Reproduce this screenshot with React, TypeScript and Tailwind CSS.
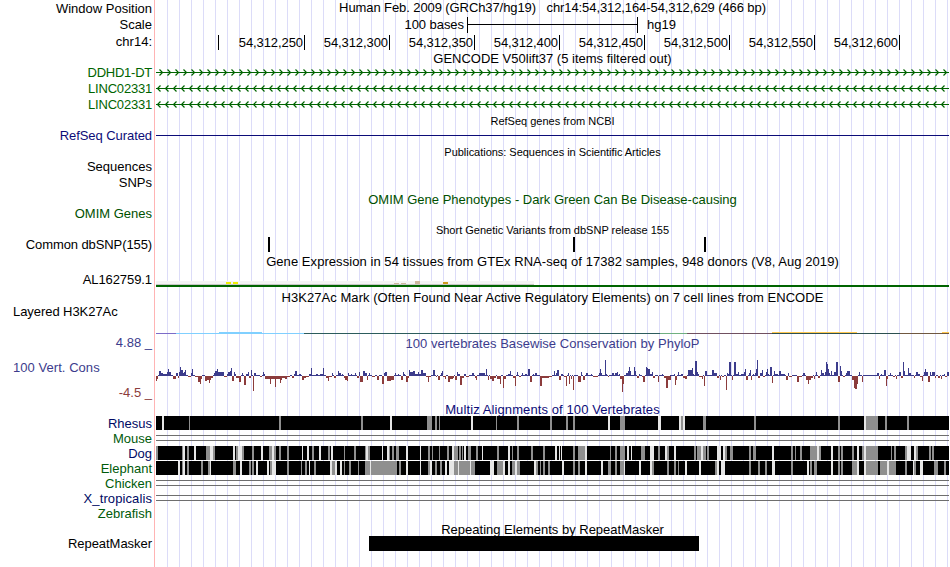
import type { ReactNode } from 'react'

// every drawing shares the same x axis: 156 is the first data pixel, 949 the end
const X0 = 156
const W = 793

const GREEN = '#006400'

const ticks = [304, 389, 474, 559, 644, 729, 814, 899]
const tickLabels = ['54,312,250', '54,312,300', '54,312,350', '54,312,400', '54,312,450', '54,312,500', '54,312,550', '54,312,600']

// [x, width, height], positive is up and negative is down
const phyloP: number[][] = [
  [156, 1, -5], [157, 1, -3], [158, 1, 1], [159, 1, 5], [160, 1, 5], [161, 2, 3], [163, 4, 2], [167, 1, 4], [168, 1, 7], [169, 2, 4], [171, 2, 1], [173, 3, -3], [176, 2, 3], [178, 1, -2],
  [179, 1, 4], [180, 1, 9], [181, 2, 6], [183, 1, 3], [184, 1, 4], [185, 1, 6], [186, 2, 1], [188, 3, -1], [191, 1, 3], [192, 1, 7], [193, 2, 1], [195, 3, -1], [198, 2, -6], [200, 1, -8], [201, 1, -3], [202, 2, 1], [205, 2, -5], [207, 2, -4], [209, 1, -7], [210, 1, -4], [211, 2, -2],
  [213, 1, 1], [214, 1, 3], [215, 2, 5], [217, 1, 7], [218, 2, 4], [220, 4, 4], [224, 3, -1], [227, 1, 2], [228, 2, 4], [230, 1, 5], [231, 1, 8], [232, 2, -5], [234, 1, 4], [235, 1, 2], [236, 3, -2], [239, 2, -6], [241, 1, 1], [242, 1, 3], [243, 1, 1], [244, 2, -9], [246, 2, 2], [248, 1, 4], [249, 2, -2], [251, 1, 6], [252, 1, 1], [253, 1, -15], [254, 2, 3], [256, 4, 1], [260, 2, -1], [263, 1, 4], [264, 1, 2],
  [265, 5, -3], [270, 1, -8], [271, 4, -3], [275, 1, -11], [276, 4, -3], [280, 1, -7], [281, 1, -4], [282, 3, -2], [285, 2, -3], [287, 3, -1], [290, 1, 1], [292, 2, -2], [294, 1, 2], [295, 2, 5], [297, 2, 1], [299, 2, 2], [302, 2, -4], [304, 2, -2], [306, 3, -1], [309, 2, 2], [311, 1, 8], [312, 4, 1], [316, 2, 2], [318, 2, 1], [320, 3, 2], [323, 1, 8], [324, 2, 1], [326, 2, -2], [328, 1, -5], [329, 3, -1], [332, 1, 3], [334, 2, -2], [338, 1, 5], [339, 2, 3], [342, 1, 2], [344, 1, -2], [345, 2, -4], [347, 1, -5], [348, 1, 3], [351, 1, 2], [355, 1, 3], [357, 2, -2], [359, 1, 4], [360, 2, -6], [362, 1, -6], [363, 2, 5], [365, 2, 3], [367, 1, -4], [369, 1, 3], [372, 3, -1], [377, 2, -4], [381, 1, 1], [382, 2, -8], [384, 1, 3], [385, 2, 4], [387, 4, -5], [391, 3, -4], [395, 1, 3], [398, 1, 2], [401, 2, -4], [403, 1, 4], [404, 1, 2], [406, 2, -6], [408, 1, -2], [409, 1, 6], [410, 3, 4], [413, 2, 5], [415, 3, 2],
  [418, 1, 4], [419, 2, 2], [421, 2, 6], [423, 3, 3], [426, 2, -1], [428, 1, -6], [429, 2, -1], [433, 2, 6], [436, 1, -1], [438, 2, -4], [441, 1, 3], [442, 1, 5], [443, 2, -1], [445, 1, -3], [446, 2, 1], [448, 2, -6], [450, 3, -3], [453, 1, -2], [455, 2, -4], [457, 1, 4], [458, 2, 2], [460, 2, -9], [462, 2, -2], [464, 2, 2], [466, 3, -1], [472, 2, 3], [475, 1, -2], [476, 1, -4], [479, 4, 3], [483, 2, 3], [486, 1, 7], [488, 1, -4], [490, 2, -3], [492, 2, -5], [494, 2, -2], [497, 3, -3], [500, 1, -8], [501, 1, 1], [503, 1, -12], [504, 2, -3], [508, 2, 2], [510, 1, 5], [513, 2, -2], [515, 1, -10], [517, 1, 4], [519, 2, -1], [522, 1, 3], [525, 2, 2], [528, 2, 7], [530, 2, -6], [533, 1, 2], [535, 2, 3], [540, 2, -10], [542, 4, -2], [546, 3, -2], [549, 3, -1], [554, 1, 5], [556, 1, 3], [557, 2, 6], [559, 2, -4], [561, 2, 2], [564, 2, -1], [566, 1, -10], [568, 1, 3], [569, 1, -8], [571, 1, -3], [573, 1, -14], [575, 3, 1], [578, 3, -6], [581, 1, 4], [583, 2, -4], [586, 2, 3], [588, 2, 1], [591, 1, 2], [593, 5, -1], [599, 1, 3], [600, 1, 7], [601, 1, 3], [605, 1, 16], [606, 1, 2], [608, 1, -1], [612, 2, 3], [615, 2, 3], [617, 1, 4], [619, 1, 2], [620, 2, -3], [622, 1, -16], [623, 1, -8], [625, 1, 1], [626, 2, 3], [628, 1, 5], [629, 1, 9], [630, 1, 5], [634, 1, 9], [635, 1, 5], [637, 2, -2], [639, 1, 2], [642, 2, -1], [643, 2, -6], [646, 1, 9], [647, 1, 8], [648, 2, 7], [650, 2, 2], [652, 1, 4], [653, 2, -2], [655, 2, 1], [658, 1, -6], [662, 1, 2], [664, 2, -2], [666, 2, -12], [668, 3, -4], [670, 1, 1], [674, 1, 2], [675, 1, -9], [676, 1, -4], [678, 1, 4], [681, 2, 2],
  [683, 2, -2], [685, 2, -3], [688, 4, 6], [692, 1, 8], [693, 1, 2], [695, 2, 15], [697, 1, 4], [698, 1, 2], [699, 3, -1], [702, 1, -3], [704, 1, -10], [705, 2, 5], [708, 3, 1], [712, 2, 6], [714, 3, 3], [717, 2, -2], [720, 1, -4], [722, 2, -1], [726, 1, -14], [727, 1, 3], [728, 1, 2], [729, 2, 14], [732, 1, -4], [734, 2, 14], [736, 2, 2], [738, 1, 4], [741, 3, 2], [744, 1, 4], [745, 1, 7], [746, 2, -4], [749, 1, 3], [750, 1, 6], [751, 1, -4], [753, 1, 2], [755, 1, 3], [756, 1, 7], [757, 1, 16], [758, 2, -2], [760, 2, 3], [762, 1, 6], [763, 2, -1], [766, 1, 4], [767, 1, 7], [768, 1, 2], [770, 2, 9], [772, 1, -7], [774, 1, 5], [775, 3, 2], [779, 2, 5], [781, 4, 2], [786, 2, -4], [788, 1, 3], [789, 3, -1], [793, 1, 1], [797, 2, -6], [799, 3, -1], [803, 2, 3], [806, 2, -4], [808, 1, -8], [809, 2, -4], [811, 2, -2], [814, 1, -3], [816, 1, 4], [818, 2, -2], [821, 1, 6], [822, 2, 3], [825, 1, 4], [826, 1, 14], [827, 1, 12], [828, 1, 7], [829, 1, 3], [831, 1, 5], [832, 2, 1], [834, 2, 4], [836, 2, 14], [838, 2, -6], [840, 1, 10], [841, 1, 5], [843, 2, -1], [846, 1, 3], [847, 3, 5], [852, 2, -4], [854, 1, -12], [855, 2, -13], [857, 1, -8], [858, 1, 1], [859, 1, 4], [862, 1, -6], [864, 13, 1], [877, 2, 3], [879, 1, -3], [881, 1, 2], [884, 2, 6], [886, 1, -10], [887, 1, -3], [890, 1, 3], [893, 2, -1], [896, 1, -3], [899, 2, 4], [901, 2, -2], [903, 1, 14], [904, 1, 5], [908, 1, 8], [909, 2, 3], [912, 2, 1], [914, 1, -2], [916, 2, 4], [918, 2, 2], [920, 2, -1], [922, 1, -5], [924, 1, 4], [925, 1, 7], [926, 2, 4], [928, 2, -6], [930, 1, 4], [932, 3, 4], [935, 1, -2], [938, 2, -2], [941, 1, -3], [944, 1, 2], [945, 2, -1], [947, 2, 4],
]

// gaps in the black alignment bars: x, shade (g grey, w light), width
const rhesus = '162w2 189g1 279g2 361g2 390w2 427g5 435g2 439g1 471w2 496g1 517g2 550g2 566g2 573g2 608w2 620g5 658w3 679w2 681g2 683w2 703g3 754g2 838g2 864w2 866g12 885g2 907g2'
const dog = '156g2 182g1 183w2 187g2 194w2 206g4 210w1 211w2 213g2 233w2 236g2 238w4 242g2 252g2 261w2 269g3 272w2 274g2 279g2 287g2 302w1 307w2 312g2 319w2 328g2 331w2 344g1 354g2 365g1 366w2 368g2 382w1 387w2 389g1 392g2 396g3 406w2 420w1 428g2 432g1 439g1 447g2 452w2 454g4 459g2 462g1 464w2 468g3 476g2 482w1 497g2 508w2 512g1 517g2 531g2 543g2 555w2 559w1 561w1 573g2 578g7 585w2 610g1 615g2 620g5 627w2 631w1 641g4 650w4 658g2 665w2 667g2 674w2 694g2 697g4 701w2 703g3 707g2 717w4 723w2 725g2 730g3 749g2 753g3 772w2 791g2 795g1 800g2 810g7 817w2 819g2 831w2 838g2 841g2 852g2 857w2 862g2 864w2 866g12 891g1 894g2 905g2 907w4 914w2 916g2 929g2 932g2'
const elephant = '178w2 182g1 183w2 187g2 201g2 208g2 210w1 233g3 240w2 249g2 252g2 256w2 267w2 270g2 272w4 287g2 301g1 305g2 309w1 314g2 330w2 332g1 333g2 335w2 340w2 344g1 349g2 358g1 365g5 370w1 371g26 399g2 406w2 420w1 428g2 430w2 435g2 440g2 445w2 449w5 454g4 458w1 459g11 470w1 471g4 490w4 497g6 503w2 508w2 512g3 515w2 517g3 534w2 536g2 540g1 543g2 548g2 562w2 573g2 578g2 585w2 601w2 608g3 615g2 620g4 624w1 639w2 650w2 652g2 667g2 674g2 678g1 685w2 699w2 715g2 717w2 721w4 749g2 758g2 765g2 772w3 791g2 807w2 810g2 814g3 831w2 838g2 841g2 852g5 857w2 864w2 866g12 880g7 887w2 889g7 905g2 913w1 914g2 920w3 934g4 944g2'

function Track({ h, label = '', labelClass = '', children }: { h: string; label?: string; labelClass?: string; children?: ReactNode }) {
  return (
    <div className={`flex shrink-0 ${h}`}>
      <div className={`flex w-[152px] mr-1 shrink-0 items-center justify-end whitespace-pre ${labelClass}`}>{label}</div>
      <div className="flex w-[793px] shrink-0 items-center justify-center whitespace-pre">{children}</div>
    </div>
  )
}

function Plot({ h, children }: { h: number; children: ReactNode }) {
  return (
    <svg width={W} height={h} viewBox={`${X0} 0 ${W} ${h}`} shapeRendering="crispEdges" className="block shrink-0 self-start">
      {children}
    </svg>
  )
}

function GeneArrows({ dir }: { dir: 'left' | 'right' }) {
  let d = ''
  for (let i = 0; i < 99; i++) {
    const x = i * 8
    d += dir === 'right' ? `M${x + 159.5} 4.5l3 3l-3 3` : `M${x + 160.5} 4.5l-3 3l3 3`
  }
  return (
    <Plot h={16}>
      <rect x={X0} y={7} width={W} height={1} fill={GREEN} />
      <path d={d} fill="none" stroke={GREEN} strokeWidth={1.2} shapeRendering="auto" />
    </Plot>
  )
}

function Alignment({ gaps }: { gaps: string }) {
  return (
    <Plot h={15}>
      <rect x={X0} y={0} width={W} height={14} fill="#000" />
      {gaps.split(' ').map((gap) => {
        const [x, w] = gap.split(/[gw]/).map(Number)
        return <rect key={gap} x={x} y={0} width={w} height={14} fill={gap.includes('g') ? '#8f8f8f' : '#e6e6e6'} />
      })}
    </Plot>
  )
}

function DoubleLine() {
  return (
    <Plot h={15}>
      <rect x={X0} y={4} width={W} height={1} fill="#6e6e6e" />
      <rect x={X0} y={9} width={W} height={1} fill="#6e6e6e" />
    </Plot>
  )
}

function Conservation() {
  return (
    <Plot h={50}>
      <rect x={158} y={23} width={W - 2} height={1} fill="#3c3c8c" />
      {phyloP.map(([x, w, v]) =>
        v > 0 ? (
          <rect key={x} x={x} y={24 - v} width={w} height={v} fill="#3c3c8c" />
        ) : (
          <g key={x}>
            <rect x={x} y={23} width={w} height={1} fill="#fff" />
            <rect x={x} y={24} width={w} height={-v} fill="#8c3c3c" />
          </g>
        ),
      )}
    </Plot>
  )
}

export default function App() {
  return (
    <div className="relative h-[567px] w-[950px] overflow-hidden bg-white font-['Liberation_Sans',sans-serif] text-[13px] leading-none text-black">
      <svg width={950} height={567} shapeRendering="crispEdges" className="absolute inset-0">
        <rect x={154} y={0} width={1} height={567} fill="#ffb4b4" />
        {Array.from({ length: 66 }, (_, i) => (
          <rect key={i} x={167 + i * 12} y={0} width={1} height={567} fill="#dcdcf8" />
        ))}
      </svg>

      <div className="relative flex flex-col">
        <Track h="h-[17px]" label="Window Position">
          <span className="pb-0.5 tracking-[-0.09px]">Human Feb. 2009 (GRCh37/hg19)   chr14:54,312,164-54,312,629 (466 bp)</span>
        </Track>
        <Track h="h-[17px]" label="Scale" labelClass="pb-0.5">
          <div className="flex w-full items-center">
            <span className="w-[308px] pb-0.5 text-right tracking-[-0.05px]">100 bases</span>
            <svg width={179} height={17} shapeRendering="crispEdges" className="ml-[3px]">
              <path d="M0.5 0v16M0 7.5h171M170.5 0v16" stroke="#000" fill="none" />
            </svg>
            <span className="ml-px pb-0.5">hg19</span>
          </div>
        </Track>
        <Track h="h-[17px]" label="chr14:" labelClass="pb-0.5">
          <div className="flex w-full items-start">
            <div className="ml-[62px] h-[15px] w-px bg-black" />
            {ticks.map((x, i) => (
              <div key={x} className={`flex h-[15px] items-center justify-end border-r border-black pr-px tracking-[-0.08px] ${i === 0 ? 'w-[86px]' : 'w-[85px]'}`}>{tickLabels[i]}</div>
            ))}
          </div>
        </Track>
        <Track h="h-[14px]">GENCODE V50lift37 (5 items filtered out)</Track>
        <Track h="h-[16px]" label="DDHD1-DT" labelClass="pb-0.5 tracking-[-0.25px] text-[#006400]"><GeneArrows dir="right" /></Track>
        <Track h="h-[16px]" label="LINC02331" labelClass="pb-0.5 tracking-[-0.2px] text-[#006400]"><GeneArrows dir="left" /></Track>
        <Track h="h-[16px]" label="LINC02331" labelClass="pb-0.5 tracking-[-0.2px] text-[#006400]"><GeneArrows dir="left" /></Track>

        <Track h="h-[16px]"><span className="text-[11px]">RefSeq genes from NCBI</span></Track>
        <Track h="h-[15px]" label="RefSeq Curated" labelClass="pb-0.5 tracking-[-0.07px] text-[#0c0c78]">
          <Plot h={15}><rect x={X0} y={6} width={W} height={1} fill="#0c0c78" /></Plot>
        </Track>
        <Track h="h-[16px]"><span className="text-[11px] tracking-[-0.03px]">Publications: Sequences in Scientific Articles</span></Track>
        <Track h="h-[15px]" label="Sequences" labelClass="pb-0.5" />
        <Track h="h-[15px]" label="SNPs" />
        <Track h="h-[18px]"><span className="text-[#005000]">OMIM Gene Phenotypes - Dark Green Can Be Disease-causing</span></Track>
        <Track h="h-[13px]" label="OMIM Genes" labelClass="pb-0.5 text-[#005000]" />
        <Track h="h-[16px]"><span className="pt-0.5 text-[11px]">Short Genetic Variants from dbSNP release 155</span></Track>
        <Track h="h-[15px]" label="Common dbSNP(155)" labelClass="tracking-[-0.1px]">
          <Plot h={15}><path d="M268 0h2v15h-2zM573 0h2v15h-2zM704 0h2v15h-2z" /></Plot>
        </Track>

        <Track h="h-[18px]"><span className="tracking-[0.06px]">Gene Expression in 54 tissues from GTEx RNA-seq of 17382 samples, 948 donors (V8, Aug 2019)</span></Track>
        <Track h="h-[20px]" label="AL162759.1" labelClass="pb-0.5 tracking-[-0.08px]">
          <Plot h={20}>
            <rect x={X0} y={11} width={378} height={4} fill="#f4f4f4" />
            <rect x={X0} y={14} width={378} height={1} fill="#c8c8c8" />
            <rect x={226} y={12} width={5} height={2} fill="#eeee00" />
            <rect x={233} y={12} width={5} height={2} fill="#eeee00" />
            <rect x={394} y={13} width={5} height={1} fill="#cdb79e" />
            <rect x={401} y={13} width={5} height={1} fill="#cdb79e" />
            <rect x={415} y={11} width={5} height={3} fill="#cdb79e" />
            <rect x={443} y={12} width={5} height={2} fill="#cd9b1d" />
            <rect x={X0} y={15} width={W} height={2} fill={GREEN} />
          </Plot>
        </Track>

        <Track h="h-[15px]"><span className="tracking-[0.05px]">H3K27Ac Mark (Often Found Near Active Regulatory Elements) on 7 cell lines from ENCODE</span></Track>
        <div className="flex h-[29px]">
          <div className="w-[156px] shrink-0 pl-[13px] tracking-[-0.06px]">Layered H3K27Ac</div>
          <Plot h={29}>
            <rect x={156} y={28} width={20} height={1} fill="#7c6cc8" />
            <rect x={176} y={28} width={128} height={1} fill="#80d0ff" />
            <rect x={219} y={27} width={43} height={2} fill="#80d0ff" />
            <rect x={304} y={28} width={356} height={1} fill="#2c5c5c" />
            <rect x={660} y={28} width={27} height={1} fill="#70b080" />
            <rect x={687} y={28} width={85} height={1} fill="#705060" />
            <rect x={772} y={27} width={85} height={1} fill="#ffc850" />
            <rect x={772} y={28} width={128} height={1} fill="#2c5050" />
            <rect x={900} y={28} width={49} height={1} fill="#705840" />
            <rect x={942} y={27} width={7} height={1} fill="#ffc850" />
          </Plot>
        </div>

        <Track h="h-[18px]" label="4.88 _" labelClass="pb-px text-[#3c3c8c]"><span className="tracking-[0.04px] text-[#3c3c8c]">100 vertebrates Basewise Conservation by PhyloP</span></Track>
        <div className="flex h-[50px]">
          <div className="flex w-[156px] shrink-0 flex-col justify-between pt-[9px] pb-[3px]">
            <span className="pl-[13px] tracking-[0.05px] text-[#3c3c8c]">100 Vert. Cons</span>
            <span className="pr-1 text-right text-[#8c3c3c]">-4.5 _</span>
          </div>
          <Conservation />
        </div>

        <Track h="h-[14px]"><span className="tracking-[0.1px] text-[#0c0c78]">Multiz Alignments of 100 Vertebrates</span></Track>
        <Track h="h-[15px]" label="Rhesus" labelClass="text-[#000a64]"><Alignment gaps={rhesus} /></Track>
        <Track h="h-[15px]" label="Mouse" labelClass="text-[#005a0a]"><DoubleLine /></Track>
        <Track h="h-[15px]" label="Dog" labelClass="text-[#000a64]"><Alignment gaps={dog} /></Track>
        <Track h="h-[15px]" label="Elephant" labelClass="text-[#005a0a]"><Alignment gaps={elephant} /></Track>
        <Track h="h-[15px]" label="Chicken" labelClass="text-[#005a0a]"><DoubleLine /></Track>
        <Track h="h-[15px]" label="X_tropicalis" labelClass="tracking-[0.1px] text-[#000a64]"><DoubleLine /></Track>
        <Track h="h-[15px]" label="Zebrafish" labelClass="text-[#005a0a]" />

        <Track h="h-[15px]"><span className="pt-0.5">Repeating Elements by RepeatMasker</span></Track>
        <Track h="h-[15px]" label="RepeatMasker" labelClass="tracking-[-0.04px]">
          <Plot h={15}><rect x={369} y={0} width={330} height={15} fill="#000" /></Plot>
        </Track>
      </div>
    </div>
  )
}
